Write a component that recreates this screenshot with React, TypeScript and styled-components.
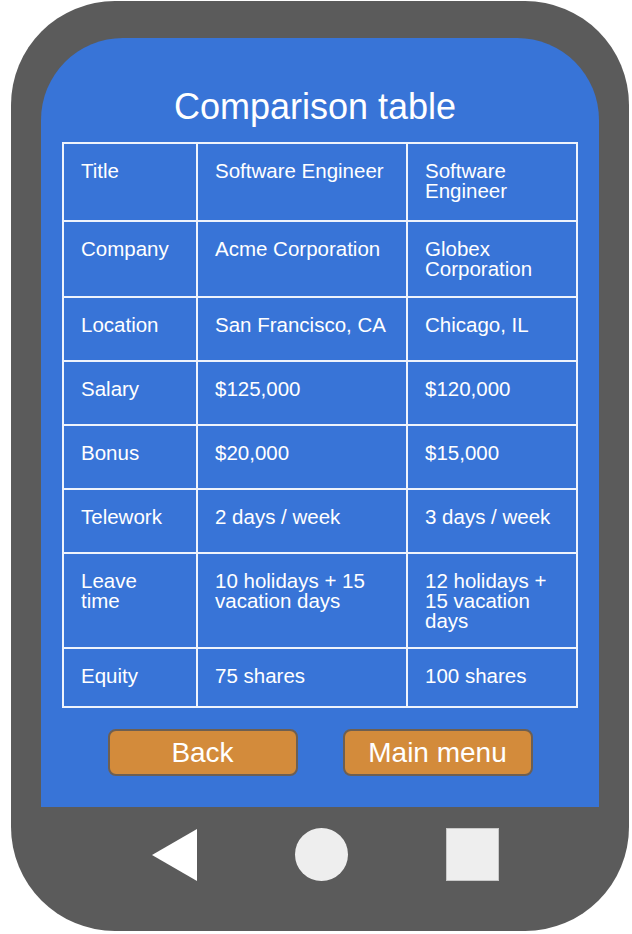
import styled, { createGlobalStyle } from "styled-components";

const GlobalStyle = createGlobalStyle`
  body {
    margin: 0;
    background: #ffffff;
    font-family: "Liberation Sans", Arial, sans-serif;
  }
`;

interface RowType {
  label: string;
  first: string;
  second: string;
  height: number;
}

const rows: RowType[] = [
  { label: "Title", first: "Software Engineer", second: "Software Engineer", height: 76 },
  { label: "Company", first: "Acme Corporation", second: "Globex Corporation", height: 74 },
  { label: "Location", first: "San Francisco, CA", second: "Chicago, IL", height: 62 },
  { label: "Salary", first: "$125,000", second: "$120,000", height: 62 },
  { label: "Bonus", first: "$20,000", second: "$15,000", height: 62 },
  { label: "Telework", first: "2 days / week", second: "3 days / week", height: 62 },
  {
    label: "Leave\ntime",
    first: "10 holidays + 15 vacation days",
    second: "12 holidays + 15 vacation days",
    height: 93,
  },
  { label: "Equity", first: "75 shares", second: "100 shares", height: 57 },
];

const Phone = styled.div`
  box-sizing: border-box;
  width: 618px;
  height: 930px;
  margin: 1px 0 0 11px;
  padding: 37px 30px 0;
  background: #5b5b5b;
  border-radius: 104px;
  display: flex;
  flex-direction: column;
`;

const Screen = styled.div`
  box-sizing: border-box;
  height: 769px;
  padding-top: 48px;
  background: #3874d7;
  border-radius: 82px 82px 0 0;
  display: flex;
  flex-direction: column;
  align-items: center;
`;

const Heading = styled.h1`
  margin: 0 10px 15px 0;
  font-size: 36px;
  font-weight: 400;
  line-height: 41px;
  color: #ffffff;
`;

const Table = styled.div`
  display: grid;
  grid-template-columns: 132px 208px 168px;
  gap: 2px;
  padding: 2px;
  background: #eef3fc;
`;

const Cell = styled.div<{ $height: number }>`
  box-sizing: border-box;
  height: ${(p) => p.$height}px;
  padding: 17px 12px 0 17px;
  background: #3874d7;
  color: #ffffff;
  font-size: 20.5px;
  line-height: 20px;
  white-space: pre-line;
`;

const Buttons = styled.div`
  display: flex;
  gap: 45px;
  margin-top: 21px;
`;

const Button = styled.button`
  box-sizing: border-box;
  width: 190px;
  height: 47px;
  padding: 0;
  background: #d38b3b;
  border: 2px solid #6e5f51;
  border-radius: 8px;
  color: #ffffff;
  font-family: "Liberation Sans", Arial, sans-serif;
  font-size: 28px;
  line-height: 1;
  cursor: pointer;
`;

const NavBar = styled.div`
  display: flex;
  justify-content: center;
  align-items: center;
  gap: 98px;
  padding: 21px 0 0 10px;
`;

const BackKey = styled.svg`
  width: 45px;
  height: 52px;
`;

const HomeKey = styled.div`
  width: 53px;
  height: 53px;
  border-radius: 50%;
  background: #eeeeee;
`;

const RecentKey = styled.div`
  box-sizing: border-box;
  width: 53px;
  height: 53px;
  background: #eeeeee;
  border: 1px solid #c9c9c9;
`;

const App = () => {
  return (
    <>
      <GlobalStyle />
      <Phone>
        <Screen>
          <Heading>Comparison table</Heading>
          <Table>
            {rows.map((row) => [
              <Cell key={`${row.label}-l`} $height={row.height}>
                {row.label}
              </Cell>,
              <Cell key={`${row.label}-a`} $height={row.height}>
                {row.first}
              </Cell>,
              <Cell key={`${row.label}-b`} $height={row.height}>
                {row.second}
              </Cell>,
            ])}
          </Table>
          <Buttons>
            <Button>Back</Button>
            <Button>Main menu</Button>
          </Buttons>
        </Screen>
        <NavBar>
          <BackKey viewBox="0 0 45 52">
            <polygon points="45,0 45,52 0,26" fill="#ffffff" />
          </BackKey>
          <HomeKey />
          <RecentKey />
        </NavBar>
      </Phone>
    </>
  );
};

export default App;
